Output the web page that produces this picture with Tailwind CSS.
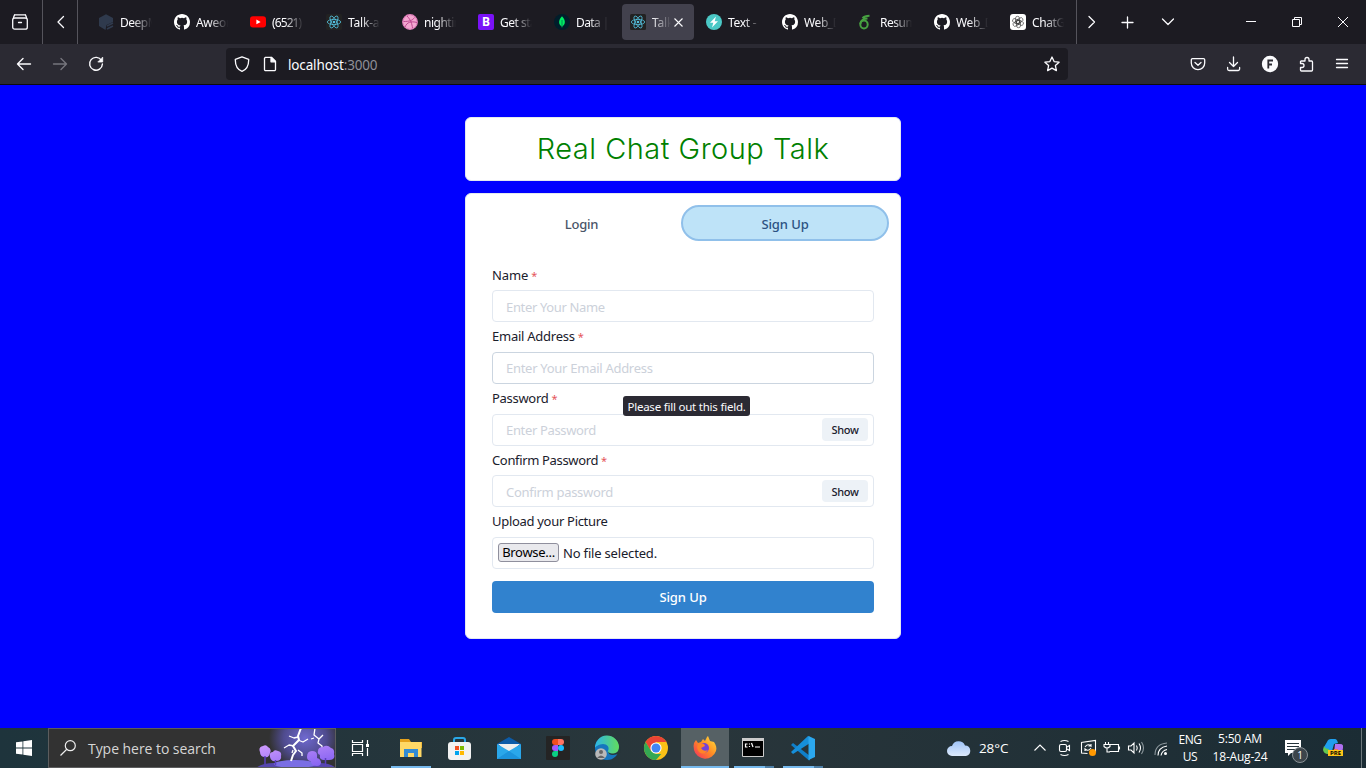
<!DOCTYPE html>
<html lang="en">
<head>
<meta charset="utf-8">
<title>Real Chat Group Talk</title>
<script src="https://cdn.jsdelivr.net/npm/@tailwindcss/browser@4"></script>
</head>
<body class="w-[1366px] h-[768px] overflow-hidden flex flex-col bg-[#0000ff] font-['Noto_Sans','Liberation_Sans',sans-serif]">
<svg class="hidden">
  <symbol id="gh" viewBox="0 0 16 16"><path fill="#fff" d="M8 0C3.58 0 0 3.58 0 8c0 3.54 2.29 6.53 5.47 7.59.4.07.55-.17.55-.38 0-.19-.01-.82-.01-1.49-2.01.37-2.53-.49-2.69-.94-.09-.23-.48-.94-.82-1.13-.28-.15-.68-.52-.01-.53.63-.01 1.08.58 1.23.82.72 1.21 1.87.87 2.33.66.07-.52.28-.87.51-1.07-1.78-.2-3.64-.89-3.64-3.95 0-.87.31-1.59.82-2.15-.08-.2-.36-1.02.08-2.12 0 0 .67-.21 2.2.82a7.6 7.6 0 0 1 4 0c1.53-1.04 2.2-.82 2.2-.82.44 1.1.16 1.92.08 2.12.51.56.82 1.27.82 2.15 0 3.07-1.87 3.75-3.65 3.95.29.25.54.73.54 1.48 0 1.07-.01 1.93-.01 2.2 0 .21.15.46.55.38A8 8 0 0 0 16 8c0-4.42-3.58-8-8-8z"/></symbol>
  <symbol id="react" viewBox="0 0 16 16"><rect width="16" height="16" rx="1.5" fill="#222"/><g fill="none" stroke="#53c1de" stroke-width=".8"><ellipse cx="8" cy="8" rx="6.7" ry="2.6"/><ellipse cx="8" cy="8" rx="6.7" ry="2.6" transform="rotate(60 8 8)"/><ellipse cx="8" cy="8" rx="6.7" ry="2.6" transform="rotate(120 8 8)"/></g><circle cx="8" cy="8" r="1.3" fill="#53c1de"/></symbol>
</svg>

<!-- Tab strip -->
<header class="h-11 flex items-center bg-[#1c1b22] text-[#fbfbfe] text-[12px] shrink-0">
  <div class="w-[43px] h-11 border-r border-[#55545c] flex items-center justify-center pr-0.5">
    <svg class="w-4 h-4" viewBox="0 0 16 16" fill="none" stroke="#fbfbfe" stroke-width="1.3" stroke-linecap="round"><path d="M2.8.9h10.4"/><rect x=".7" y="4" width="14.6" height="11.2" rx="2"/><path d="M2.500.9 1.500 3.500M13.500.9l1 2.600M6.500 8.500h3"/></svg>
  </div>
  <div class="w-[35px] h-11 border-r border-[#55545c] flex items-center justify-center">
    <svg class="w-4 h-4" viewBox="0 0 16 16" fill="none" stroke="#fbfbfe" stroke-width="1.3" stroke-linecap="round" stroke-linejoin="round"><path d="M11.500 2.500 6 8l5.500 5.500"/></svg>
  </div>
  <div class="w-[999px] h-11 border-r border-[#55545c] flex items-center pl-[10px]">
    <div class="w-[76px] pl-[10px] flex items-center gap-[6px] shrink-0"><svg class="w-4 h-4 shrink-0" viewBox="0 0 16 16"><path fill="#2f3a4d" d="M8 .3 15 4v4L8.500 11l-1 5L1 12V4z"/><path stroke="#2f3a4d" stroke-width="1.800" d="m9 12 6-3M9 15l6-3"/></svg><span class="w-8 pt-px overflow-hidden whitespace-nowrap tracking-[-0.5px] [mask-image:linear-gradient(to_right,black_40%,transparent)]">DeepM</span></div>
    <div class="w-[76px] pl-[10px] flex items-center gap-[6px] shrink-0"><svg class="w-4 h-4 shrink-0"><use href="#gh"/></svg><span class="w-8 pt-px overflow-hidden whitespace-nowrap tracking-[-0.3px] [mask-image:linear-gradient(to_right,black_40%,transparent)]">Aweor</span></div>
    <div class="w-[76px] pl-[10px] flex items-center gap-[6px] shrink-0"><svg class="w-4 h-4 shrink-0" viewBox="0 0 16 16"><rect y="2.300" width="16" height="11.200" rx="3" fill="#f00"/><path fill="#fff" d="m6.400 5.500 4.200 2.400-4.200 2.400z"/></svg><span class="w-8 pt-px overflow-hidden whitespace-nowrap tracking-[-0.9px] [mask-image:linear-gradient(to_right,black_40%,transparent)]">(6521)</span></div>
    <div class="w-[76px] pl-[10px] flex items-center gap-[6px] shrink-0"><svg class="w-4 h-4 shrink-0"><use href="#react"/></svg><span class="w-8 pt-px overflow-hidden whitespace-nowrap tracking-[-0.2px] [mask-image:linear-gradient(to_right,black_40%,transparent)]">Talk-a-</span></div>
    <div class="w-[76px] pl-[10px] flex items-center gap-[6px] shrink-0"><svg class="w-4 h-4 shrink-0" viewBox="0 0 16 16"><circle cx="8" cy="8" r="7.300" fill="#f3a6d0" stroke="#e07fbb" stroke-width="1.200"/><path fill="none" stroke="#b83d89" stroke-width=".9" d="M5 2c4 4 5 8 5.500 12M1.500 7.500c6 0 9-1 11-4M3 13c2-5 6-6 12-4.500"/></svg><span class="w-8 pt-px overflow-hidden whitespace-nowrap tracking-[-0.5px] [mask-image:linear-gradient(to_right,black_40%,transparent)]">nightin</span></div>
    <div class="w-[76px] pl-[10px] flex items-center gap-[6px] shrink-0"><span class="w-4 h-4 shrink-0 rounded-[2px] bg-[#7a12f8] text-white font-bold text-[12px] leading-4 text-center">B</span><span class="w-8 pt-px overflow-hidden whitespace-nowrap tracking-[-0.5px] [mask-image:linear-gradient(to_right,black_40%,transparent)]">Get sta</span></div>
    <div class="w-[76px] pl-[10px] flex items-center gap-[6px] shrink-0"><svg class="w-4 h-4 shrink-0" viewBox="0 0 16 16"><circle cx="8" cy="8" r="8" fill="#001e2b"/><path fill="#00ed64" d="M8 2.300c4 4 3.500 8.200.4 10.200L8 14l-.4-1.500C4.500 10.500 4 6.300 8 2.300z"/><path stroke="#00684a" stroke-width=".7" d="M8 6v7"/></svg><span class="w-8 pt-px overflow-hidden whitespace-nowrap tracking-[-0.6px] [mask-image:linear-gradient(to_right,black_40%,transparent)]">Data |</span></div>
    <div class="w-[76px] px-[2px] shrink-0"><div class="w-[72px] h-9 rounded bg-[#42414d] flex items-center pl-2 gap-[6px]"><svg class="w-4 h-4 shrink-0"><use href="#react"/></svg><span class="w-[19px] pt-px overflow-hidden whitespace-nowrap tracking-[-0.2px] [mask-image:linear-gradient(to_right,black,transparent)]">Talk</span><svg class="w-[9px] h-[9px] shrink-0 -ml-[3px]" viewBox="0 0 9 9" stroke="#fbfbfe" stroke-width="1.100"><path d="m.5.5 8 8M8.500.5l-8 8"/></svg></div></div>
    <div class="w-[76px] pl-[10px] flex items-center gap-[6px] shrink-0"><svg class="w-4 h-4 shrink-0" viewBox="0 0 16 16"><circle cx="8" cy="8" r="8" fill="#4bc8c6"/><path fill="#fff" d="M10 2.500 4 8.800h3.300L6 13.500l6-6.300H8.700z"/></svg><span class="w-8 pt-px overflow-hidden whitespace-nowrap tracking-[-0.3px] [mask-image:linear-gradient(to_right,black_50%,transparent)]">Text -</span></div>
    <div class="w-[76px] pl-[10px] flex items-center gap-[6px] shrink-0"><svg class="w-4 h-4 shrink-0"><use href="#gh"/></svg><span class="w-8 pt-px overflow-hidden whitespace-nowrap tracking-[-0.4px] [mask-image:linear-gradient(to_right,black_40%,transparent)]">Web_D</span></div>
    <div class="w-[76px] pl-[10px] flex items-center gap-[6px] shrink-0"><svg class="w-4 h-4 shrink-0" viewBox="0 0 16 16" fill="none" stroke="#47a141" stroke-width="2"><ellipse cx="6" cy="10.500" rx="3.700" ry="3.900"/><path d="M2.300 10C2.300 6 6 4.500 9.500 4.500M4.500 4.200C6 2.500 8.500 1.800 11.500 1.800"/></svg><span class="w-8 pt-px overflow-hidden whitespace-nowrap tracking-[-0.5px] [mask-image:linear-gradient(to_right,black_40%,transparent)]">Resum</span></div>
    <div class="w-[76px] pl-[10px] flex items-center gap-[6px] shrink-0"><svg class="w-4 h-4 shrink-0"><use href="#gh"/></svg><span class="w-8 pt-px overflow-hidden whitespace-nowrap tracking-[-0.4px] [mask-image:linear-gradient(to_right,black_40%,transparent)]">Web_D</span></div>
    <div class="w-[76px] pl-[10px] flex items-center gap-[6px] shrink-0"><svg class="w-4 h-4 shrink-0" viewBox="0 0 16 16"><rect width="16" height="16" rx="3" fill="#fff"/><g fill="none" stroke="#333" stroke-width=".6"><rect x="5.500" y="2.300" width="4" height="7.500" rx="2"/><rect x="5.500" y="2.300" width="4" height="7.500" rx="2" transform="rotate(60 8 8)"/><rect x="5.500" y="2.300" width="4" height="7.500" rx="2" transform="rotate(120 8 8)"/><rect x="5.500" y="2.300" width="4" height="7.500" rx="2" transform="rotate(180 8 8)"/><rect x="5.500" y="2.300" width="4" height="7.500" rx="2" transform="rotate(240 8 8)"/><rect x="5.500" y="2.300" width="4" height="7.500" rx="2" transform="rotate(300 8 8)"/></g></svg><span class="w-8 pt-px overflow-hidden whitespace-nowrap tracking-[-0.4px] [mask-image:linear-gradient(to_right,black_40%,transparent)]">ChatG</span></div>
  </div>
  <svg class="w-[289px] h-11" viewBox="1077 0 289 44" fill="none" stroke="#fbfbfe" stroke-width="1.300" stroke-linecap="round" stroke-linejoin="round"><path d="m1089 16.500 5.500 5.500-5.500 5.500M1127.500 17v11M1122 22.500h11M1162.500 19l5.500 5.500 5.500-5.500"/><path stroke-width="1" stroke-linecap="butt" stroke-linejoin="miter" d="M1246 21.500h10M1292.500 19.500h7v7h-7zM1294.500 19.500v-2h7v7h-2M1338 17l10 10M1348 17l-10 10"/></svg>
</header>

<!-- Navigation bar -->
<nav class="h-[41px] border-b border-[#0c0c0d] bg-[#2b2a33] flex items-center shrink-0">
  <svg class="w-[226px] h-10" viewBox="0 44 226 40" fill="none" stroke="#fbfbfe" stroke-width="1.400" stroke-linecap="round" stroke-linejoin="round"><path d="M30.500 64H17.500m5.500-5.500L17.500 64l5.500 5.500"/><path stroke="#76757d" d="M53.500 64h13m-5.500-5.500L66.500 64l-5.500 5.500"/><path d="M101.500 60.500A6.400 6.400 0 1 0 102.400 64"/><path fill="#fbfbfe" stroke-width=".8" d="M102.700 57.500v4.500h-4.500z"/></svg>
  <div class="w-[842px] h-8 rounded bg-[#1c1b22] flex items-center pl-2 pr-2">
    <svg class="w-4 h-4" viewBox="0 0 16 16" fill="none" stroke="#fbfbfe" stroke-width="1.300" stroke-linejoin="round"><path d="M8 .8 14.700 3.300C14.800 9 13 13.500 8 15.400 3 13.500 1.200 9 1.300 3.300z"/></svg>
    <svg class="w-4 h-4 ml-3" viewBox="0 0 16 16" fill="none" stroke="#fbfbfe" stroke-width="1.300" stroke-linejoin="round"><path d="M3.500 1.300h6l4 4v8.200a1.200 1.200 0 0 1-1.200 1.200H3.700a1.200 1.200 0 0 1-1.200-1.200V2.300z"/><path fill="#fbfbfe" d="M9 1.500v4.300h4.300z"/></svg>
    <div class="ml-[10px] pt-0.5 text-[13.500px] text-[#fbfbfe] grow tracking-[-0.150px]">localhost<span class="text-[#8f8f98]">:3000</span></div>
    <svg class="w-4 h-4" viewBox="0 0 16 16" fill="none" stroke="#fbfbfe" stroke-width="1.300" stroke-linejoin="round"><path d="m8 1 2.100 4.600 5 .6-3.700 3.400 1 5L8 12.100l-4.400 2.500 1-5L.9 6.200l5-.6z"/></svg>
  </div>
  <svg class="w-[298px] h-10" viewBox="1068 44 298 40" fill="none" stroke="#fbfbfe" stroke-width="1.300" stroke-linecap="round" stroke-linejoin="round"><path d="M1192.500 58.600h11a1.200 1.200 0 0 1 1.200 1.200V63a6.700 6.700 0 0 1-13.400 0v-3.200a1.200 1.200 0 0 1 1.200-1.200zM1195 62.500l3 2.800 3-2.800M1233.500 57v9.500m-4-4 4 4 4-4M1227.600 67.500v1.500a1.500 1.500 0 0 0 1.500 1.500h9a1.500 1.500 0 0 0 1.500-1.500v-1.500"/><circle cx="1270" cy="64" r="7.500" fill="#fbfbfe"/><path stroke="#2b2a33" stroke-width="1.800" stroke-linecap="butt" stroke-linejoin="miter" d="M1268.300 68.500v-8h4.700M1268 64.500h4"/><path d="M1301 61h4v-1.500a2 2 0 0 1 4 0V61h2.500a1 1 0 0 1 1 1v8a1 1 0 0 1-1 1h-10a1 1 0 0 1-1-1v-2.500h1.500a2 2 0 0 0 0-4h-1.500V61.500M1336.500 59.500h11M1336.500 63.500h11M1336.500 67.500h11"/></svg>
</nav>

<!-- Page -->
<main class="grow flex flex-col items-center pt-8 gap-3">
  <h1 class="w-[436px] h-16 bg-white border border-[#e2e8f0] rounded-[6px] flex items-center justify-center text-[#008000] font-['Inter','Liberation_Sans',sans-serif] font-[350] text-[29px] tracking-[0.500px]">Real Chat Group Talk</h1>
  <section class="w-[436px] h-[446px] bg-white border border-[#e2e8f0] rounded-[6px] p-[11px] text-[13px] text-[#1a202c] tracking-[-0.100px]">
    <div class="flex h-9 font-medium">
      <div class="w-[204px] pl-[5px] flex items-center justify-center text-[#4a5568] pt-[3px] tracking-[-0.200px]">Login</div>
      <div class="w-[208px] flex items-center justify-center rounded-full bg-[#bee3f8] border-2 border-[#90c0ea] text-[#2c5282] pt-[3px]">Sign Up</div>
    </div>
    <form class="px-[15px] pt-6">
      <div class="h-[61.750px]"><div class="h-5 mb-[5px] leading-5">Name<span class="text-[#e5555a] ml-[3px] text-[11px]">*</span></div><div class="h-8 border border-[#e2e8f0] rounded px-[13px] flex items-center pt-[3px] text-[#ccd1da] tracking-[-0.350px]">Enter Your Name</div></div>
      <div class="h-[61.750px]"><div class="h-5 mb-[5px] leading-[18px] tracking-[-0.250px]">Email Address<span class="text-[#e5555a] ml-[3px] text-[11px]">*</span></div><div class="h-8 border border-[#cbd5e0] rounded px-[13px] flex items-center pt-0.5 text-[#ccd1da] tracking-[-0.280px]">Enter Your Email Address</div></div>
      <div class="h-[61.750px] relative"><div class="h-5 mb-[5px] leading-[18px] tracking-[-0.300px]">Password<span class="text-[#e5555a] ml-[3px] text-[11px]">*</span></div><div class="h-8 border border-[#e2e8f0] rounded pl-[13px] pr-[5px] flex items-center justify-between text-[#ccd1da] tracking-[-0.350px]"><span class="pt-0.5">Enter Password</span><span class="w-[46px] h-[23px] rounded bg-[#edf2f7] text-[#1a202c] text-[11px] font-medium flex items-center justify-center pt-px">Show</span></div>
        <div class="absolute left-[131px] top-[7px] w-[127px] h-5 rounded-[3px] bg-[#2b2a33] text-[#fbfbfe] text-[11.500px] tracking-[-0.220px] flex items-center justify-center whitespace-nowrap pt-0.5">Please fill out this field.</div>
      </div>
      <div class="h-[61.750px]"><div class="h-5 mb-[5px] leading-5 tracking-[-0.350px]">Confirm Password<span class="text-[#e5555a] ml-[3px] text-[11px]">*</span></div><div class="h-8 border border-[#e2e8f0] rounded pl-[13px] pr-[5px] flex items-center justify-between text-[#ccd1da] tracking-[-0.300px]"><span class="pt-0.5">Confirm password</span><span class="w-[46px] h-[22px] rounded bg-[#edf2f7] text-[#1a202c] text-[11px] font-medium flex items-center justify-center pt-px">Show</span></div></div>
      <div class="h-[69px]"><div class="h-5 mb-[5px] leading-[18px] tracking-[-0.300px]">Upload your Picture</div><div class="h-8 border border-[#e2e8f0] rounded px-[5px] flex items-center gap-1"><span class="w-[61px] h-[19px] rounded-[3px] border border-[#8f8f9d] bg-[#e9e9ed] text-black flex items-center justify-center tracking-[-0.300px] pt-px -mt-px">Browse...</span><span class="pt-0.5 tracking-[-0.180px]">No file selected.</span></div></div>
      <div class="h-8 rounded bg-[#3182ce] text-white font-medium flex items-center justify-center pt-0.5">Sign Up</div>
    </form>
  </section>
</main>

<!-- Taskbar -->
<footer class="h-10 bg-linear-to-r from-[#1e343c] via-[#29363b] to-[#1b2c34] flex items-center shrink-0 text-white font-['Open_Sans','Liberation_Sans',sans-serif]">
  <div class="w-12 flex justify-center"><svg class="w-4 h-4" viewBox="0 0 16 16" fill="#fff"><path d="M0 2.300 6.500 1.400V7.600H0zM7.300 1.300 16 0v7.600H7.300zM0 8.400h6.500v6.200L0 13.700zM7.300 8.400H16V16l-8.700-1.300z"/></svg></div>
  <div class="w-[288px] h-10 border border-[#5c5d5e] bg-[#323232] flex items-center pl-[11px]">
    <svg class="w-4 h-4" viewBox="0 0 16 16" fill="none" stroke="#eee" stroke-width="1.200"><circle cx="10.300" cy="5.700" r="5"/><path d="M6.800 9.300.5 15.500"/></svg>
    <div class="ml-3 text-[14px] text-[#d6d6d6] w-[161px] whitespace-nowrap tracking-[-0.050px]">Type here to search</div>
    <svg class="w-[86px] h-[38px] shrink-0" viewBox="249 729 86 38"><defs><radialGradient id="sky"><stop offset="0" stop-color="#6f69d0"/><stop offset=".6" stop-color="#4f4b8e"/><stop offset="1" stop-color="#323232"/></radialGradient><linearGradient id="tree" x2="1" y2="1"><stop stop-color="#cf9bfd"/><stop offset="1" stop-color="#7d5cf0"/></linearGradient></defs><ellipse cx="305" cy="738" rx="36" ry="32" fill="url(#sky)"/><path fill="#5546ae" d="M256 768q6-5 18-5h46q10 0 16 5z"/><ellipse cx="295" cy="764" rx="21" ry="4" fill="#7a6ee4"/><g fill="none" stroke="#fff" stroke-width="2" stroke-linejoin="round"><path d="m301 728-3 8 1 4-6 6 3 5-3 4-2 6"/><path stroke-width="1.300" d="m298 737-4 1-5-2m9 4 5 2 5-3m-14 7-5-1-5 3m9 2-1 3m6-3 4 3v3M315 728l-1 7 5 4-1 4 4 3v3m-3-10 4-4m-9 3-3 1"/></g><g fill="url(#tree)"><path d="M260 752q-2-5 3-6 3-2 5 1 4 2 2 6-1 5-5 4-5 0-5-5zM270 757q-1-5 3-5 1-3 5-1 4 1 3 5 1 5-5 5-5 1-6-4zM307 757q0-6 5-6 5 0 5 4v6q-5 2-7 0-3-1-3-4zM318 751q0-4 5-4 4-3 8 1 4 1 3 6 2 6-5 6h-5q-5 0-4-5-3-1-2-4zM311 761q1-4 5-3 4 0 5 4 0 4-4 4-6 0-6-5z"/></g><path stroke="#5b3fc0" stroke-width="1.500" d="M265 756v8M275.500 760v5M325.500 758v8"/></svg>
  </div>
  <svg class="w-[614px] h-10" viewBox="336 728 614 40"><g fill="none" stroke="#fff" stroke-width="1.200"><path d="M352.500 740v2.500h10V740M352.500 756v-2.500h10v2.500M352.500 744.500h10v7h-10zM367.500 740v4M367.500 748v8"/></g><rect x="366" y="744" width="3" height="3" fill="#fff"/>
    <path fill="#e5a11b" d="M400 739h9l2 3h11v6h-22z"/><path fill="#ffd866" d="M400 742h21.500v15H400z"/><path fill="#338bd3" d="M404 749h14v8h-4v-4h-6v4h-4z"/>
    <path fill="none" stroke="#2aa8e8" stroke-width="2" d="M454 744v-4q0-2 2-2h7q2 0 2 2v4"/><rect x="448" y="742" width="23" height="18" rx="3" fill="#f2f2f2"/><path fill="#f25022" d="M455 746h4v4h-4z"/><path fill="#7fba00" d="M460 746h4v4h-4z"/><path fill="#00a4ef" d="M455 751h4v4h-4z"/><path fill="#ffb900" d="M460 751h4v4h-4z"/>
    <path fill="#0c5ba8" d="m497 744 12-7 12 7v6h-24z"/><path fill="#eee" d="M498 744h22l-9 8h-4z"/><path fill="#2aa7ea" d="m497 744 12 7 12-7v15h-24z"/><path fill="#1c93dc" d="m497 759 12-8 12 8z"/>
    <rect x="546" y="736" width="24" height="24" rx="1" fill="#242424"/><path fill="#f24e1e" d="M558 739v6h-3a3 3 0 0 1 0-6z"/><path fill="#ff7262" d="M558 739h3a3 3 0 0 1 0 6h-3z"/><path fill="#a259ff" d="M558 745v6h-3a3 3 0 0 1 0-6z"/><circle cx="561" cy="748" r="3" fill="#1abcfe"/><path fill="#0acf83" d="M558 751v3a3 3 0 1 1-3-3z"/>
    <defs><linearGradient id="edge" x2="1"><stop stop-color="#2cb5e8"/><stop offset="1" stop-color="#62dc5c"/></linearGradient><linearGradient id="fox" x1="1" x2="0" y2="1"><stop stop-color="#ffe63d"/><stop offset=".5" stop-color="#ff8a24"/><stop offset="1" stop-color="#f32664"/></linearGradient></defs>
    <circle cx="607" cy="748" r="12" fill="#1676be"/><path fill="url(#edge)" d="M595 748a12 12 0 0 1 24-1c0 5-3 7-7 7-3 0-5-1-4-3 2-4-1-7-5-7-4 0-8 3-8 4z"/><path fill="#26363b" d="M608 751c0 4 5 5.500 12 2l1-6h-2c0 5-3 6.500-7 6.500-2 0-4-1-4-2.500z"/><circle cx="601" cy="754" r="5.800" fill="#b9b9b9"/><circle cx="601" cy="752" r="2" fill="#666"/><path fill="#666" d="M597 758q4-5 8 0z"/>
    <circle cx="656" cy="748" r="12" fill="#fbc116"/><path fill="#ea4335" d="M645.600 742a12 12 0 0 1 20.800 0H656l-5.200 9z"/><path fill="#34a853" d="M645.600 742 651 751l5 3h5.200L656 760a12 12 0 0 1-10.400-18z"/><circle cx="656" cy="748" r="5.600" fill="#fff"/><circle cx="656" cy="748" r="4.500" fill="#4285f4"/>
    <path fill="#566165" d="M681 728h48v40h-48z"/><path fill="url(#fox)" d="M694 743l2-3 2 3 3-1 2-3 2 2 2-4 1-1 2 5 4 1c2 3 3 6 2 9a11.500 11.500 0 0 1-22-1q-1-4 0-7z"/><circle cx="704" cy="748" r="5" fill="#7542d8"/><path fill="#ff8427" d="M698 744q6-2 7 2l-4 2q2 4 7 2-4 6-9 2-3-4-1-8z"/>
    <path fill="#000" stroke="#ccc" d="M742.500 738.500h21v18h-21z"/><path fill="#ccc" d="M742 738h22v3h-22z"/><path stroke="#fff" stroke-width="1.200" fill="none" d="M747.500 744h-2v3h2M749.500 743.500v1M749.500 746v1M751.500 743l1.500 4M755 747h5"/>
    <path fill="#0f7fc9" d="m791 745 2-2 17 13v4l-1 .5z"/><path fill="#168fda" d="m791 752 17-16 2 1v6l-17 11z"/><path fill="#2ba7ee" d="m808.500 736 6.500 3v18l-6.500 3z"/>
    <path fill="#76b9ed" d="M391 766h40v2h-40zM681 766h48v2h-48zM734 766h31v2h-31zM783 766h31v2h-31z"/><path fill="#4e7fa6" d="M765 766h9v2h-9zM814 766h9v2h-9z"/>
  </svg>
  <svg class="w-6 h-4 -ml-[3px]" viewBox="0 0 24 16"><defs><linearGradient id="cloud" y2="1" x2="0"><stop stop-color="#a0c4f8"/><stop offset="1" stop-color="#dce9fb"/></linearGradient></defs><path fill="url(#cloud)" d="M5 16a5 5 0 0 1 0-10A7 7 0 0 1 18 5.500 5.300 5.300 0 0 1 19 16z"/></svg>
  <div class="ml-[8px] w-[46px] text-[13.500px] whitespace-nowrap tracking-[-0.100px]">28°C</div>
  <svg class="w-[148px] h-10 shrink-0" viewBox="1025 728 148 40" fill="none" stroke="#fff" stroke-width="1.100"><path d="m1034.500 750.500 5.500-5.500 5.500 5.500"/><rect x="1059.500" y="744.500" width="7" height="7" rx="1.500"/><path d="m1067 747 2.500-1.500v5l-2.500-1.500M1060.500 741.500q4-2 8 0M1060.500 754.500q4 2 8 0"/><path d="M1081 742.500 1095.500 740.500v12M1081.500 742.500V753l6 .5M1085 747q3-4 6-1v-2m0 2h-2.500M1091 748q-3 4-6 1v2"/><circle cx="1092.500" cy="752.500" r="3.500" fill="#ff9800" stroke="none"/><path d="M1110.500 744.500h8v7h-9M1119.500 746.500v3M1105.500 742v2.500M1108.500 742v2.500M1104 744.500h6v2q-3 3-6 0zM1107 748.500v3.500h3"/><path d="M1128.500 746h2.500l3-3v10l-3-3h-2.500zM1136.500 745.500q1.500 2.500 0 5M1139 743.500q3 4.500 0 9"/><path stroke="#8d989d" d="M1141.500 742q4 6 0 12M1155 755q0-11 12-12"/><path d="M1158 755.500q0-8 9-9.500M1161 755.500q1-5 6-6"/><circle cx="1165.500" cy="753.500" r="1.500" fill="#fff" stroke="none"/></svg>
  <div class="w-[34px] text-[12px] leading-[17px] text-center tracking-[-0.500px]">ENG<br>US</div>
  <div class="w-[66px] text-[12px] leading-[18px] text-center tracking-[-0.200px] whitespace-nowrap">5:50 AM<br>18-Aug-24</div>
  <div class="relative ml-[11px] w-6 h-6 shrink-0"><svg class="w-6 h-6" viewBox="0 0 24 24"><path fill="#fff" d="M1 4h16v13H7l-3 3v-3H1z"/><path stroke="#26343b" stroke-width="1.200" d="M3 7.500h12M3 10.500h12M3 13.500h8"/></svg><span class="absolute left-[8px] top-[11px] w-4 h-4 rounded-full bg-[#3c454b] border border-[#8a9297] text-[10px] leading-[14px] text-center">1</span></div>
  <div class="relative ml-[15px] w-5 h-5 shrink-0"><svg class="w-5 h-5" viewBox="0 0 20 20"><path fill="#1f9fee" d="M4 4q1-3 4-3h4q2 0 3 4l-4 1-2 7H2q-2 0-1-4z"/><path fill="#63c84f" d="M1 8q1 3 5 3l-1 5q-4 0-5-4z"/><path fill="#b070f0" d="M12 6h5q4 0 3 4l-1 5h-8z"/><path fill="#f6774a" d="M9 16l2-5h4l-1 6H9z"/></svg><span class="absolute left-[5px] top-[12px] w-[15px] h-[6px] bg-[#ffc619] text-black text-[6px] leading-[6px] font-bold text-center">PRE</span></div>
  <div class="ml-auto mr-[4px] w-px h-10 bg-[#6d787c]"></div>
</footer>
</body>
</html>
